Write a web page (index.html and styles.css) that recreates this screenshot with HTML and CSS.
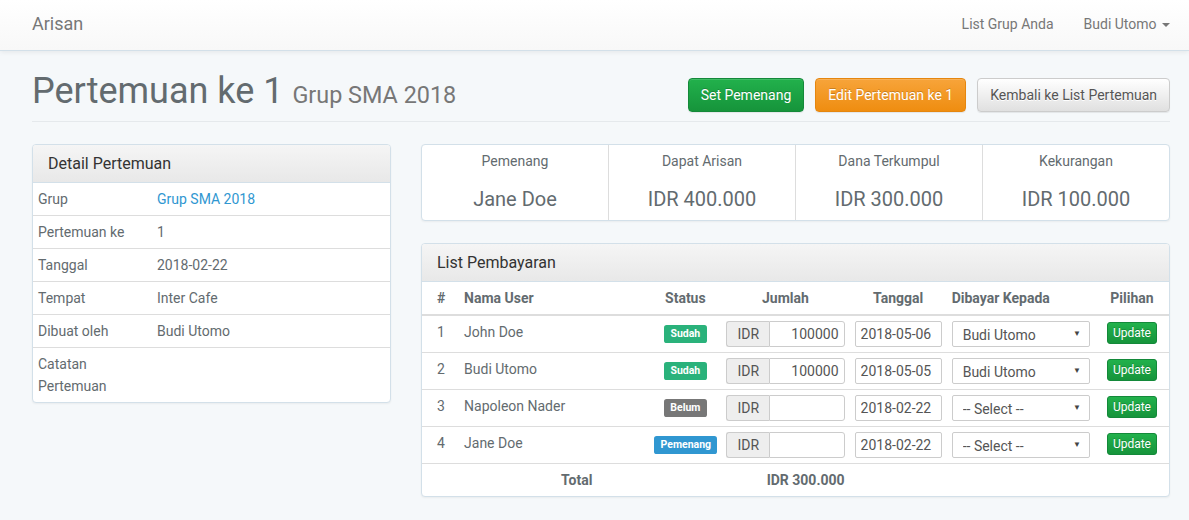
FILE: index.html
```html
<!DOCTYPE html>
<html lang="id">
<head>
<meta charset="utf-8">
<title>Arisan</title>
<link rel="stylesheet" href="styles.css">
</head>
<body>
<nav class="navbar">
  <div class="container nav-inner">
    <a class="brand" href="#">Arisan</a>
    <ul class="nav-right">
      <li><a href="#">List Grup Anda</a></li>
      <li><a href="#">Budi Utomo <span class="caret"></span></a></li>
    </ul>
  </div>
</nav>
<main class="container">
  <div class="page-header">
    <h1>Pertemuan ke 1 <small>Grup SMA 2018</small></h1>
    <div class="actions">
      <a class="btn btn-success" href="#">Set Pemenang</a>
      <a class="btn btn-warning" href="#">Edit Pertemuan ke 1</a>
      <a class="btn btn-default" href="#">Kembali ke List Pertemuan</a>
    </div>
  </div>
  <div class="row">
    <div class="col-left">
      <div class="panel">
        <div class="panel-heading">Detail Pertemuan</div>
        <table class="detail">
          <colgroup><col class="dc1"><col></colgroup>
          <tbody>
            <tr><td>Grup</td><td><a class="link" href="#">Grup SMA 2018</a></td></tr>
            <tr><td>Pertemuan ke</td><td>1</td></tr>
            <tr><td>Tanggal</td><td>2018-02-22</td></tr>
            <tr><td>Tempat</td><td>Inter Cafe</td></tr>
            <tr><td>Dibuat oleh</td><td>Budi Utomo</td></tr>
            <tr><td>Catatan Pertemuan</td><td></td></tr>
          </tbody>
        </table>
      </div>
    </div>
    <div class="col-right">
      <div class="panel stats">
        <div class="stat"><div class="stat-label">Pemenang</div><div class="stat-value">Jane Doe</div></div>
        <div class="stat"><div class="stat-label">Dapat Arisan</div><div class="stat-value">IDR 400.000</div></div>
        <div class="stat"><div class="stat-label">Dana Terkumpul</div><div class="stat-value">IDR 300.000</div></div>
        <div class="stat"><div class="stat-label">Kekurangan</div><div class="stat-value">IDR 100.000</div></div>
      </div>
      <div class="panel">
        <div class="panel-heading">List Pembayaran</div>
        <table class="pay">
          <colgroup>
            <col class="c1"><col class="c2"><col class="c3"><col class="c4"><col class="c5"><col class="c6"><col class="c7">
          </colgroup>
          <thead>
            <tr>
              <th>#</th><th>Nama User</th><th class="center">Status</th><th class="center">Jumlah</th><th class="center">Tanggal</th><th>Dibayar Kepada</th><th class="center">Pilihan</th>
            </tr>
          </thead>
          <tbody>
            <tr>
              <td>1</td><td>John Doe</td>
              <td class="center"><span class="label label-success">Sudah</span></td>
              <td><div class="ig"><span class="ig-addon">IDR</span><input class="ig-input" type="text" value="100000"></div></td>
              <td><input class="date" type="text" value="2018-05-06"></td>
              <td><div class="sel"><select><option>Budi Utomo</option></select><span class="sel-arrow">&#9660;</span></div></td>
              <td class="center"><a class="btn-xs" href="#">Update</a></td>
            </tr>
            <tr>
              <td>2</td><td>Budi Utomo</td>
              <td class="center"><span class="label label-success">Sudah</span></td>
              <td><div class="ig"><span class="ig-addon">IDR</span><input class="ig-input" type="text" value="100000"></div></td>
              <td><input class="date" type="text" value="2018-05-05"></td>
              <td><div class="sel"><select><option>Budi Utomo</option></select><span class="sel-arrow">&#9660;</span></div></td>
              <td class="center"><a class="btn-xs" href="#">Update</a></td>
            </tr>
            <tr>
              <td>3</td><td>Napoleon Nader</td>
              <td class="center"><span class="label label-default">Belum</span></td>
              <td><div class="ig"><span class="ig-addon">IDR</span><input class="ig-input" type="text" value=""></div></td>
              <td><input class="date" type="text" value="2018-02-22"></td>
              <td><div class="sel"><select><option>-- Select --</option></select><span class="sel-arrow">&#9660;</span></div></td>
              <td class="center"><a class="btn-xs" href="#">Update</a></td>
            </tr>
            <tr>
              <td>4</td><td>Jane Doe</td>
              <td class="center"><span class="label label-primary">Pemenang</span></td>
              <td><div class="ig"><span class="ig-addon">IDR</span><input class="ig-input" type="text" value=""></div></td>
              <td><input class="date" type="text" value="2018-02-22"></td>
              <td><div class="sel"><select><option>-- Select --</option></select><span class="sel-arrow">&#9660;</span></div></td>
              <td class="center"><a class="btn-xs" href="#">Update</a></td>
            </tr>
            <tr class="total">
              <td colspan="3" class="center">Total</td>
              <td class="right">IDR 300.000</td>
              <td></td><td></td><td></td>
            </tr>
          </tbody>
        </table>
      </div>
    </div>
  </div>
</main>
</body>
</html>
```
FILE: styles.css
```css
* { box-sizing: border-box; }
html, body { margin: 0; padding: 0; }
body {
  background: #f5f8fa;
  font-family: Roboto, "Liberation Sans", sans-serif;
  font-size: 14px;
  line-height: 22px;
  color: #636b6f;
}
a { text-decoration: none; }
.container { width: 1138px; margin-left: 32px; }

/* navbar */
.navbar {
  height: 51px;
  background: linear-gradient(to bottom, #ffffff 0, #f8f8f8 100%);
  border-bottom: 1px solid #d3e0e9;
  box-shadow: 0 1px 5px rgba(0,0,0,.075);
}
.nav-inner { display: flex; justify-content: space-between; align-items: center; height: 48px; }
.brand { font-size: 18px; color: #777; line-height: 20px; }
.nav-right { list-style: none; margin: 0 -15px 0 0; padding: 0; display: flex; }
.nav-right a { display: block; padding: 0 15px; color: #777; line-height: 48px; }
.caret {
  display: inline-block; width: 0; height: 0; margin-left: 2px; vertical-align: middle;
  border-top: 4px solid #777; border-left: 4px solid transparent; border-right: 4px solid transparent;
}

/* page header */
.page-header {
  margin-top: 21px;
  padding-bottom: 9px;
  border-bottom: 1px solid #e5e9ec;
  margin-bottom: 22px;
  display: flex;
  justify-content: space-between;
  align-items: flex-end;
}
h1 { margin: 0; font-size: 36px; font-weight: 400; line-height: 1.1; color: #636b6f; }
h1 small { font-size: 65%; color: #777; line-height: 1; font-weight: 400; }
.actions { display: flex; gap: 11px; }
.btn {
  display: inline-block; padding: 6px 12px; font-size: 14px; line-height: 20px;
  border: 1px solid transparent; border-radius: 4px;
  box-shadow: inset 0 1px 0 rgba(255,255,255,.15), 0 1px 1px rgba(0,0,0,.075);
}
.btn-success { color: #fff; background: linear-gradient(to bottom, #22b14c 0, #16943b 100%); border-color: #14893a; text-shadow: 0 -1px 0 rgba(0,0,0,.2); }
.btn-warning { color: #fff; background: linear-gradient(to bottom, #f7a43a 0, #ef8d10 100%); border-color: #e5860f; text-shadow: 0 -1px 0 rgba(0,0,0,.2); }
.btn-default { color: #555; background: linear-gradient(to bottom, #ffffff 0, #e0e0e0 100%); border-color: #ccc; text-shadow: 0 1px 0 #fff; }

/* layout */
.row { display: flex; gap: 30px; }
.col-left { width: 359px; }
.col-right { width: 749px; }

/* panels */
.panel {
  background: #fff; border: 1px solid #d3e0e9; border-radius: 4px;
  box-shadow: 0 1px 2px rgba(0,0,0,.05); margin-bottom: 22px; overflow: hidden;
}
.panel-heading {
  padding: 10px 15px; font-size: 16px; line-height: 17px; color: #333;
  background: linear-gradient(to bottom, #f5f5f5 0, #e8e8e8 100%);
  border-bottom: 1px solid #d3e0e9;
}

.detail { width: 100%; border-collapse: collapse; table-layout: fixed; }
.dc1 { width: 119px; }
.detail td { padding: 5px; border-top: 1px solid #ddd; vertical-align: top; }
.detail tr:first-child td { border-top: 0; }
.link { color: #3097d1; }

/* stats */
.stats { display: flex; }
.stat { flex: 1; text-align: center; padding: 5px; border-left: 1px solid #ddd; }
.stat:first-child { border-left: 0; }
.stat-label { line-height: 22px; }
.stat-value { font-size: 20px; line-height: 32px; margin-top: 11px; }

/* payments */
.pay { width: 100%; border-collapse: collapse; table-layout: fixed; }
.c1 { width: 37px; } .c2 { width: 190px; } .c3 { width: 72px; } .c4 { width: 128px; }
.c5 { width: 97px; } .c6 { width: 148px; } .c7 { width: 74px; }
.pay th, .pay td { padding: 5px; border-top: 1px solid #ddd; vertical-align: top; text-align: left; }
.pay thead th { border-top: 0; border-bottom: 2px solid #ddd; font-weight: 700; }
.pay th:first-child, .pay td:first-child { padding-left: 15px; }
.pay .center { text-align: center; }
.pay .right { text-align: right; }
.total td { font-weight: 700; }

.label {
  display: inline; padding: .2em .6em .3em; font-size: 10.5px; font-weight: 700; line-height: 1;
  color: #fff; border-radius: .25em; white-space: nowrap;
}
.label-success { background: #2ab27b; }
.label-default { background: #777; }
.label-primary { background: #3097d1; }

.ig { display: flex; height: 26px; }
.ig-addon {
  padding: 0 10px; background: #eee; border: 1px solid #ccc; border-right: 0;
  border-radius: 3px 0 0 3px; line-height: 24px; color: #555;
}
.ig-input, .date, .sel select {
  height: 26px; border: 1px solid #ccc; font-family: inherit; font-size: 14px; color: #555;
  background: #fff; margin: 0; outline: none; display: block;
}
.ig-input { flex: 1; min-width: 0; border-radius: 0 3px 3px 0; text-align: right; padding: 0 5px; }
.date { width: 100%; border-radius: 2px; padding: 0 5px; }
.sel { position: relative; }
.sel select {
  width: 100%; padding: 2px 10px 0; border-radius: 2px;
  -webkit-appearance: none; appearance: none;
}
.sel-arrow { position: absolute; right: 9px; top: 6px; font-size: 8px; line-height: 14px; color: #444; pointer-events: none; }
.btn-xs {
  display: inline-block; margin-top: 1px; padding: 1px 5px; font-size: 12px; line-height: 18px; color: #fff;
  border: 1px solid #14893a; border-radius: 3px;
  background: linear-gradient(to bottom, #22b14c 0, #16943b 100%);
  text-shadow: 0 -1px 0 rgba(0,0,0,.2);
}
```
